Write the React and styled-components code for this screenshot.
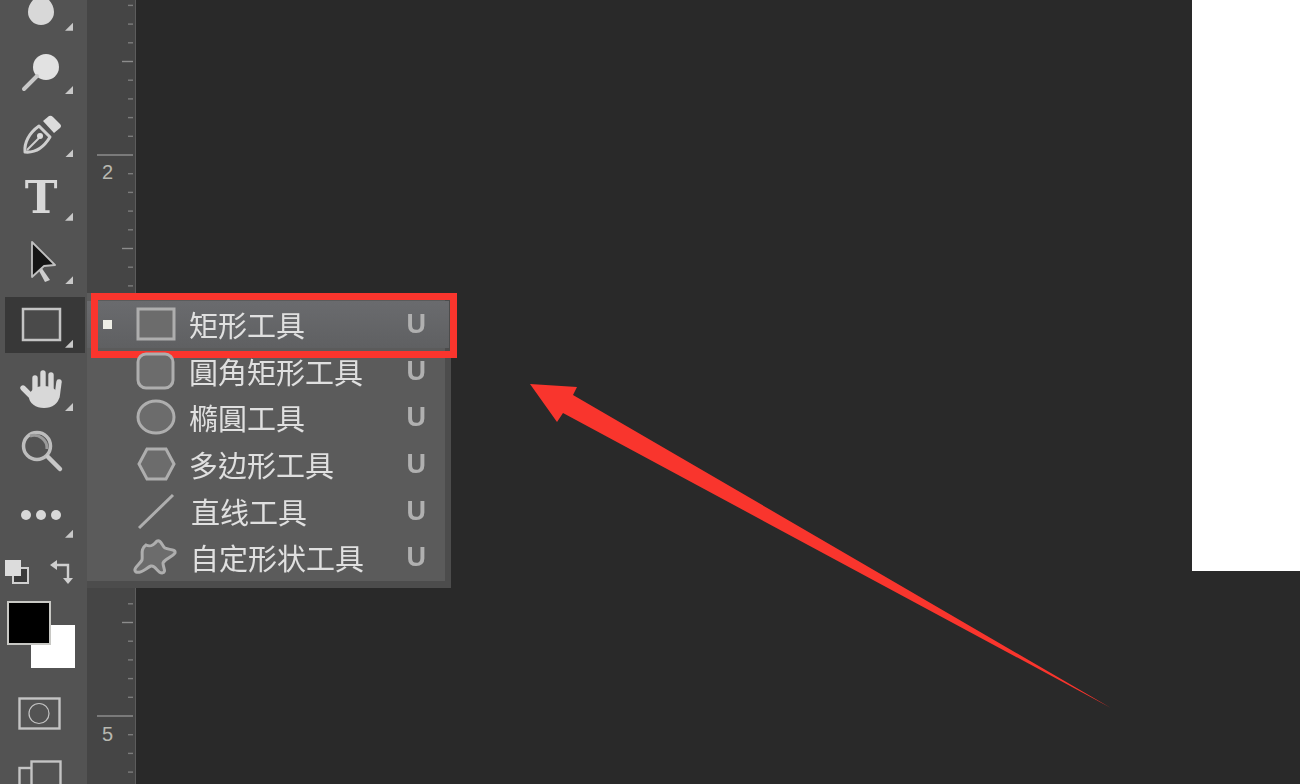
import styled, { createGlobalStyle } from 'styled-components';

const GlobalStyle = createGlobalStyle`
  html, body {
    margin: 0;
    height: 100%;
    background: #292929;
    overflow: hidden;
  }
`;

const Stage = styled.div`
  position: relative;
  display: flex;
  width: 1300px;
  height: 784px;
  overflow: hidden;
  font-family: 'Liberation Sans', 'Noto Sans CJK TC', sans-serif;
`;

const Toolbar = styled.div`
  display: flex;
  flex-direction: column;
  flex: 0 0 87px;
  height: 784px;
  overflow: hidden;
  background: #535353;
  filter: blur(0.5px);
`;

const ToolList = styled.div`
  display: flex;
  flex-direction: column;
  margin-top: -24px;
`;

const ToolSlot = styled.div`
  display: flex;
  align-items: center;
  height: 63.4px;
  flex: none;
  padding-left: 5px;
`;

const ToolButton = styled.div`
  position: relative;
  display: flex;
  align-items: center;
  justify-content: center;
  width: 80px;
  height: 56px;
  padding-right: 8px;
  box-sizing: border-box;
  background: ${(p) => (p.$active ? '#383838' : 'transparent')};
`;

const Corner = styled.span`
  position: absolute;
  right: 12px;
  bottom: 5px;
  width: 8px;
  height: 8px;
  background: #c8c8c8;
  clip-path: polygon(100% 0, 100% 100%, 0 100%);
`;

const TypeGlyph = styled.span`
  font-family: 'DejaVu Serif', serif;
  font-weight: 700;
  font-size: 44px;
  line-height: 50px;
  color: #d8d8d8;
`;

const SwapRow = styled.div`
  display: flex;
  justify-content: space-between;
  align-items: center;
  height: 30px;
  margin-top: 11px;
  padding: 0 12px 0 4px;
`;

const Swatches = styled.div`
  position: relative;
  height: 68px;
  margin: 15px 0 0 7px;
`;

const Foreground = styled.div`
  position: absolute;
  left: 0;
  top: 0;
  z-index: 1;
  width: 40px;
  height: 40px;
  background: #000;
  border: 2px solid #c8c8c4;
`;

const Background = styled.div`
  position: absolute;
  left: 24px;
  top: 24px;
  width: 44px;
  height: 43px;
  background: #fff;
`;

const ModeIcons = styled.div`
  display: flex;
  flex-direction: column;
  gap: 30px;
  margin: 30px 0 0 18px;
`;

const Ruler = styled.div`
  flex: 0 0 48px;
  height: 784px;
  background: #454545;
  border-right: 1px solid #5c5c5c;
`;

const Canvas = styled.div`
  display: flex;
  justify-content: flex-end;
  align-items: flex-start;
  flex: 1;
  background: #292929;
`;

const Artboard = styled.div`
  width: 108px;
  height: 571px;
  background: #fff;
`;

const Flyout = styled.div`
  position: absolute;
  left: 87px;
  top: 293px;
  width: 358px;
  padding-top: 8px;
  background: #5b5b5b;
  border-right: 6px solid #4c4c4c;
  border-bottom: 7px solid #4c4c4c;
  filter: blur(0.4px);
`;

const Row = styled.div`
  position: relative;
  display: grid;
  grid-template-columns: 50px 40px 1fr auto;
  align-items: center;
  height: 46.6px;
  padding-right: ${(p) => (p.$selected ? 23 : 19)}px;
  margin-right: ${(p) => (p.$selected ? -4 : 0)}px;
  background: ${(p) => (p.$selected ? 'linear-gradient(#6a6b6e, #5f6062)' : 'transparent')};

  ${(p) =>
    p.$selected &&
    `
    &::after {
      content: '';
      position: absolute;
      left: 4px;
      top: -8px;
      right: -8px;
      bottom: -10px;
      border: 7px solid #f9352d;
    }
  `}
`;

const Bullet = styled.span`
  width: 9px;
  height: 9px;
  margin-left: 16px;
  background: #eeeee6;
`;

const RowIcon = styled.svg`
  overflow: visible;
  margin-left: -1px;
`;

const RowLabel = styled.span`
  padding-left: ${(p) => 12 + (p.$nudge || 0)}px;
  font-family: 'Noto Sans CJK TC', 'Noto Sans CJK SC', sans-serif;
  font-size: 29px;
  line-height: 40px;
  color: #e0e0e0;
  white-space: nowrap;
`;

const Shortcut = styled.span`
  font-family: 'Liberation Sans', sans-serif;
  font-weight: 700;
  font-size: 27px;
  line-height: 40px;
  color: #b0b0b0;
`;

const Overlay = styled.svg`
  position: absolute;
  left: 0;
  top: 0;
  pointer-events: none;
`;

const ICON = '#d8d8d8';

function DropIcon() {
  return (
    <svg width="50" height="50" viewBox="0 0 50 50">
      <path d="M25 8 C29 14 38 19 38 29 A13 13 0 0 1 12 29 C12 19 21 14 25 8Z" fill={ICON} />
    </svg>
  );
}

function DodgeIcon() {
  return (
    <svg width="50" height="50" viewBox="0 0 50 50">
      <circle cx="30" cy="21" r="13" fill="#e2e2e2" />
      <line x1="8" y1="43" x2="21" y2="30" stroke="#c8c8c8" strokeWidth="4" strokeLinecap="round" />
    </svg>
  );
}

function PenIcon() {
  return (
    <svg width="50" height="50" viewBox="0 0 50 50">
      <path d="M9 43 C8 34 13 24 23 17 L34 28 C28 38 19 44 9 43Z" fill="none" stroke="#cfcfcf" strokeWidth="3" strokeLinejoin="round" />
      <path d="M27 12 L33 7 Q35 6 37 8 L44 15 Q46 17 44 19 L38 24Z" fill="#dcdcdc" />
      <line x1="11" y1="41" x2="23" y2="29" stroke="#cfcfcf" strokeWidth="2" />
      <circle cx="24" cy="27" r="3" fill="#dcdcdc" />
    </svg>
  );
}

function SelectIcon() {
  return (
    <svg width="50" height="50" viewBox="0 0 50 50">
      <path d="M25 31 L34 44 L29 46 L22 33Z" fill="#cfcfcf" />
      <path d="M16 6 L39 29 L28 30 L16 41Z" fill="#151515" stroke="#c0c0c0" strokeWidth="1.8" strokeLinejoin="round" />
    </svg>
  );
}

function RectIcon() {
  return (
    <svg width="50" height="50" viewBox="0 0 50 50">
      <rect x="7" y="9" width="37" height="31" fill="#4a4a4a" stroke="#c4c4c4" strokeWidth="2.5" />
    </svg>
  );
}

function HandIcon() {
  return (
    <svg width="50" height="50" viewBox="0 0 50 50">
      <g stroke={ICON} strokeWidth="5.4" strokeLinecap="round">
        <line x1="19" y1="15" x2="19" y2="32" />
        <line x1="27" y1="10" x2="27" y2="32" />
        <line x1="35" y1="12" x2="35" y2="32" />
        <line x1="43" y1="19" x2="41" y2="34" />
        <line x1="7" y1="25" x2="17" y2="35" />
      </g>
      <ellipse cx="28" cy="34" rx="15" ry="11" fill={ICON} />
    </svg>
  );
}

function ZoomIcon() {
  return (
    <svg width="50" height="50" viewBox="0 0 50 50">
      <circle cx="21" cy="20" r="13.5" fill="none" stroke="#bdbdbd" strokeWidth="3.5" />
      <path d="M14 10 A13 13 0 0 1 31 23" fill="none" stroke="#9a9a9a" strokeWidth="3" />
      <line x1="32" y1="31" x2="44" y2="43" stroke="#c8c8c8" strokeWidth="4.5" strokeLinecap="round" />
    </svg>
  );
}

function MoreIcon() {
  return (
    <svg width="50" height="50" viewBox="0 0 50 50">
      <circle cx="10" cy="25" r="5" fill={ICON} />
      <circle cx="25" cy="25" r="5" fill={ICON} />
      <circle cx="40" cy="25" r="5" fill={ICON} />
    </svg>
  );
}

function DefaultColorsIcon() {
  return (
    <svg width="26" height="26" viewBox="0 0 26 26">
      <rect x="9" y="9" width="15" height="15" fill="#3a3a3a" stroke="#d0d0d0" strokeWidth="2" />
      <rect x="1" y="1" width="16" height="16" fill="#dcdcdc" />
    </svg>
  );
}

function SwapIcon() {
  return (
    <svg width="26" height="26" viewBox="0 0 26 26">
      <path d="M5 6 H19 V20" fill="none" stroke="#cfcfcf" strokeWidth="2.4" />
      <path d="M1 6 L8 1 V11Z" fill="#cfcfcf" />
      <path d="M14 19 H24 L19 25Z" fill="#cfcfcf" />
    </svg>
  );
}

function MaskIcon() {
  return (
    <svg width="43" height="33" viewBox="0 0 43 33">
      <rect x="1.5" y="1.5" width="40" height="30" fill="none" stroke="#c4c4c4" strokeWidth="2.4" />
      <circle cx="21" cy="16.5" r="10" fill="none" stroke="#c4c4c4" strokeWidth="1.2" />
    </svg>
  );
}

function ScreenIcon() {
  return (
    <svg width="44" height="24" viewBox="0 0 44 24">
      <rect x="1.5" y="8" width="16" height="24" fill="#535353" stroke="#c4c4c4" strokeWidth="2.4" />
      <rect x="13.5" y="1.5" width="29" height="34" fill="#535353" stroke="#c4c4c4" strokeWidth="2.4" />
    </svg>
  );
}

function RulerMarks() {
  const ticks = [];
  for (let k = -8; k <= 34; k++) {
    const y = 155 + k * 18.7;
    const x1 = k % 10 === 0 ? 10 : k % 5 === 0 ? 35 : 41;
    ticks.push(<line key={k} x1={x1} y1={y} x2="46" y2={y} stroke={k % 5 === 0 ? '#8c8c8c' : '#7c7c7c'} strokeWidth="1.4" />);
  }
  return (
    <svg width="48" height="784" viewBox="0 0 48 784">
      {ticks}
      <text x="15" y="179" fontSize="20" fill="#b8b8b0" fontFamily="Liberation Sans, sans-serif">2</text>
      <text x="15" y="741" fontSize="20" fill="#b8b8b0" fontFamily="Liberation Sans, sans-serif">5</text>
    </svg>
  );
}

const shapeStroke = { fill: '#6c6c6c', stroke: '#aeaeae', strokeWidth: 3 };

const shapeItems = [
  { label: '矩形工具', selected: true, icon: <rect x="2" y="5" width="36" height="30" {...shapeStroke} /> },
  { label: '圓角矩形工具', icon: <rect x="2" y="3" width="35" height="34" rx="8" {...shapeStroke} /> },
  { label: '橢圓工具', icon: <ellipse cx="20" cy="20" rx="18" ry="16" {...shapeStroke} /> },
  { label: '多边形工具', icon: <polygon points="3,20 11,5 30,5 38,20 30,35 11,35" {...shapeStroke} /> },
  { label: '直线工具', nudge: 2, icon: <line x1="3" y1="37" x2="37" y2="4" stroke="#aeaeae" strokeWidth="3" /> },
  {
    label: '自定形状工具',
    nudge: 1,
    icon: (
      <path
        d="M10 8 C14 10 17 9 21 4 C25 2 26 9 29 11 C33 13 40 12 39 16 C36 21 29 21 27 26 C27 31 31 35 26 36 C21 36 20 28 15 29 C10 31 5 37 0 35 C-4 32 4 27 6 23 C7 18 4 12 10 8Z"
        {...shapeStroke}
      />
    ),
  },
];

function App() {
  return (
    <Stage>
      <GlobalStyle />
      <Toolbar>
        <ToolList>
          <ToolSlot><ToolButton><DropIcon /><Corner /></ToolButton></ToolSlot>
          <ToolSlot><ToolButton><DodgeIcon /><Corner /></ToolButton></ToolSlot>
          <ToolSlot><ToolButton><PenIcon /><Corner /></ToolButton></ToolSlot>
          <ToolSlot><ToolButton><TypeGlyph>T</TypeGlyph><Corner /></ToolButton></ToolSlot>
          <ToolSlot><ToolButton><SelectIcon /><Corner /></ToolButton></ToolSlot>
          <ToolSlot><ToolButton $active><RectIcon /><Corner /></ToolButton></ToolSlot>
          <ToolSlot><ToolButton><HandIcon /><Corner /></ToolButton></ToolSlot>
          <ToolSlot><ToolButton><ZoomIcon /></ToolButton></ToolSlot>
          <ToolSlot><ToolButton><MoreIcon /><Corner /></ToolButton></ToolSlot>
        </ToolList>
        <SwapRow>
          <DefaultColorsIcon />
          <SwapIcon />
        </SwapRow>
        <Swatches>
          <Foreground />
          <Background />
        </Swatches>
        <ModeIcons>
          <MaskIcon />
          <ScreenIcon />
        </ModeIcons>
      </Toolbar>
      <Ruler>
        <RulerMarks />
      </Ruler>
      <Canvas>
        <Artboard />
      </Canvas>
      <Flyout>
        {shapeItems.map((item) => (
          <Row key={item.label} $selected={item.selected}>
            {item.selected ? <Bullet /> : <span />}
            <RowIcon width="40" height="40" viewBox="0 0 40 40">{item.icon}</RowIcon>
            <RowLabel $nudge={item.nudge}>{item.label}</RowLabel>
            <Shortcut>U</Shortcut>
          </Row>
        ))}
      </Flyout>
      <Overlay width="1300" height="784" viewBox="0 0 1300 784">
        <polygon points="530,384 577,387 573,395 1111,708 563,413 557,422" fill="#f9352d" />
      </Overlay>
    </Stage>
  );
}

export default App;
